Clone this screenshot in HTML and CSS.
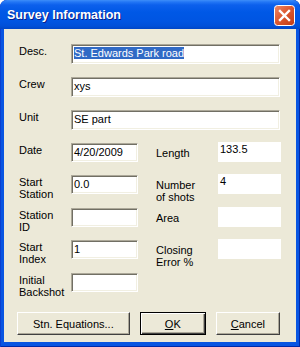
FILE: index.html
```html
<!DOCTYPE html>
<html lang="en">
<head>
  <meta charset="UTF-8">
  <title>Survey Information</title>
  <link rel="stylesheet" href="styles.css">
</head>
<body>
  <div class="window">
    <div class="titlebar">
      <span class="title">Survey Information</span>
      <span class="close">
        <svg width="21" height="21" viewBox="0 0 21 21">
          <defs>
            <linearGradient id="red" x1="0" y1="0" x2="1" y2="1">
              <stop offset="0" stop-color="#EE8A68"/>
              <stop offset="0.45" stop-color="#DD5A32"/>
              <stop offset="1" stop-color="#C13A12"/>
            </linearGradient>
          </defs>
          <rect x="0.5" y="0.5" width="20" height="20" rx="3" fill="url(#red)" stroke="#fff"/>
          <path d="M6 6 L15 15 M15 6 L6 15" stroke="#fff" stroke-width="2.4" stroke-linecap="square"/>
        </svg>
      </span>
    </div>

    <div class="client">
      <div class="top_fields">
        <div class="lbl">Desc.</div>
        <div class="edit"><span class="sel">St. Edwards Park road</span></div>
        <div class="lbl">Crew</div>
        <div class="edit">xys</div>
        <div class="lbl">Unit</div>
        <div class="edit">SE part</div>
      </div>

      <div class="fields">
        <div class="lbl">Date</div>
        <div class="edit">4/20/2009</div>
        <div class="lbl right">Length</div>
        <div class="static">133.5</div>

        <div class="lbl">Start<br>Station</div>
        <div class="edit">0.0</div>
        <div class="lbl right">Number<br>of shots</div>
        <div class="static">4</div>

        <div class="lbl">Station<br>ID</div>
        <div class="edit"></div>
        <div class="lbl right">Area</div>
        <div class="static"></div>

        <div class="lbl">Start<br>Index</div>
        <div class="edit">1</div>
        <div class="lbl right">Closing<br>Error %</div>
        <div class="static"></div>

        <div class="lbl">Initial<br>Backshot</div>
        <div class="edit"></div>
      </div>

      <div class="buttons">
        <div class="btn btn_stn">Stn. Equations...</div>
        <div class="btn btn_ok default"><span><u>O</u>K</span></div>
        <div class="btn btn_cancel"><span><u>C</u>ancel</span></div>
      </div>
    </div>
  </div>
</body>
</html>
```

FILE: styles.css
```css
* {
  box-sizing: border-box;
  margin: 0;
  padding: 0;
}

body {
  background-color: #fff;
  font-family: "Liberation Sans", Arial, sans-serif;
  font-size: 11px;
  color: #000;
}

.window {
  width: 300px;
  height: 347px;
  display: flex;
  flex-direction: column;
  background-color: #0855E2;
  border-radius: 7px 7px 0 0;
  overflow: hidden;
  box-shadow: inset 1px 0 #0A3FD0, inset -1px 0 #0029A8, inset 0 -1px #0029A8;
}

.titlebar {
  height: 29px;
  flex: none;
  display: flex;
  align-items: center;
  justify-content: space-between;
  padding: 1px 5px 0 7px;
  border-radius: 7px 7px 0 0;
  background: linear-gradient(to bottom, #3D8EF9 0, #2276F5 2px, #0C60EC 5px, #0058E6 12px, #0055E2 21px, #0050D9 26px, #0046C6 29px);
}
.title {
  color: #fff;
  font-weight: bold;
  font-size: 12.5px;
  text-shadow: 1px 1px #0A1E8A;
}
.close {
  display: block;
  width: 21px;
  height: 21px;
}
.close svg {
  display: block;
}

.client {
  flex: 1;
  margin: 0 4px 5px 4px;
  background-color: #ECE9D8;
  padding: 15px 16px 0 15px;
}

.top_fields {
  display: grid;
  grid-template-columns: 52px 1fr;
  grid-auto-rows: 20px;
  row-gap: 13px;
}

.lbl {
  line-height: 12px;
  padding-top: 1px;
}
.lbl.right {
  padding-left: 18px;
  padding-top: 4px;
}

.edit {
  background-color: #fff;
  border: 1px solid;
  border-color: #ACA899 #fff #fff #ACA899;
  box-shadow: inset 1px 1px #716F64, inset -1px -1px #F1EFE2;
  padding: 2px 2px 0 2px;
  line-height: 13px;
  white-space: nowrap;
  overflow: hidden;
}
.sel {
  background-color: #316AC5;
  color: #fff;
}

.fields {
  margin-top: 13px;
  display: grid;
  grid-template-columns: 52px 67px 80px 63px;
  grid-template-rows: 32px 33px 32px 33px 19px;
}
.fields .edit {
  height: 19px;
  padding-top: 2px;
}
.static {
  background-color: #fff;
  height: 20px;
  margin-top: -1px;
  padding: 1px 2px 0 2px;
  line-height: 13px;
}

.buttons {
  display: flex;
  margin: 20px 0 0 -2px;
}
.btn {
  height: 23px;
  display: flex;
  align-items: center;
  justify-content: center;
  background-color: #ECE9D8;
  border: 1px solid;
  border-color: #fff #404040 #404040 #fff;
  box-shadow: inset -1px -1px #ACA899;
}
.btn.default {
  border-color: #000;
  box-shadow: inset 1px 1px #fff, inset -1px -1px #404040, inset -2px -2px #ACA899;
}
.btn_stn {
  width: 116px;
}
.btn_ok {
  width: 68px;
  margin-left: 10px;
}
.btn_cancel {
  width: 66px;
  margin-left: 10px;
}
```
